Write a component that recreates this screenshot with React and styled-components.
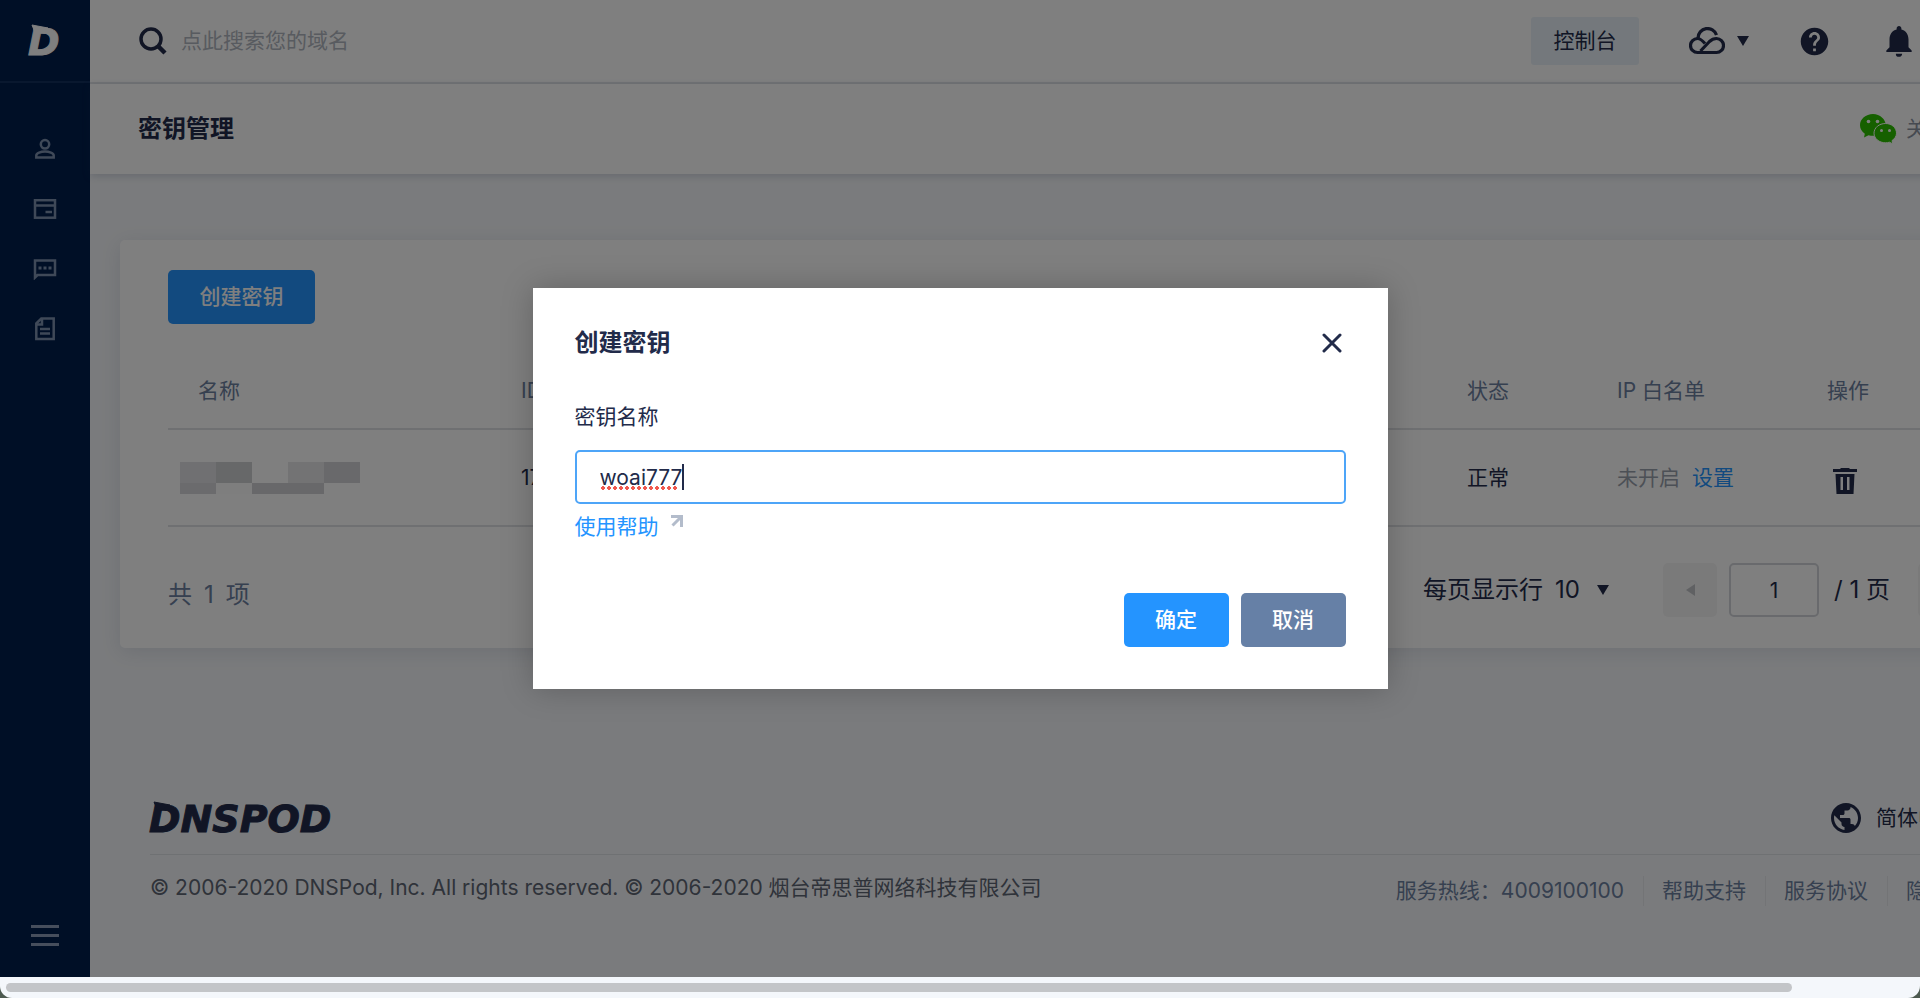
import React, { useState } from 'react';
import styled, { createGlobalStyle } from 'styled-components';
import { MdHelp, MdNotifications, MdPublic } from 'react-icons/md';

const GlobalStyle = createGlobalStyle`
  * { box-sizing: border-box; }
  body {
    margin: 0;
    background: #4d5a50;
    color: #222b4a;
    font-family: Inter, "Noto Sans CJK SC", sans-serif;
    font-size: 21px;
    line-height: 30px;
  }
  button, input, select { font: inherit; color: inherit; }
  button { border: 0; background: none; padding: 0; cursor: pointer; }
  a { color: inherit; text-decoration: none; }
  svg { display: block; flex: none; }
`;

const PersonIcon = () => (
  <svg width="22" height="22" viewBox="0 0 22 22" fill="none" stroke="currentColor" strokeWidth="2.500">
    <circle cx="11" cy="6.300" r="4.200" />
    <path d="M2.300 19.500v-2c0-2.500 4.500-4 8.700-4s8.700 1.500 8.700 4v2z" />
  </svg>
);

const CardIcon = () => (
  <svg width="24" height="20" viewBox="0 0 24 20" fill="none" stroke="currentColor" strokeWidth="2.500">
    <rect x="2" y="1.200" width="20" height="17.500" />
    <path d="M2 6.500h20" />
    <path d="M12.500 13h6.500" />
  </svg>
);

const ChatIcon = () => (
  <svg width="24" height="21" viewBox="0 0 24 21" fill="none" stroke="currentColor" strokeWidth="2.500">
    <path d="M2 18.500V1.500h20v14.500H4.500z" />
    <path d="M5.500 9h3M10.500 9h3M15.500 9h3" strokeWidth="3" />
  </svg>
);

const DocIcon = () => (
  <svg width="20" height="24" viewBox="0 0 20 24" fill="none" stroke="currentColor" strokeWidth="2.500">
    <path d="M1.300 6.500l5-5h12.400v20.500H1.300z" />
    <path d="M1.300 7.500h5.700V1.500" />
    <path d="M5 12h10M5 16.500h10" />
  </svg>
);

const SearchIcon = () => (
  <svg width="28" height="28" viewBox="0 0 28 28" fill="none" stroke="currentColor" strokeWidth="3.500">
    <circle cx="12" cy="12" r="10" />
    <path d="M19 19l7 7" strokeWidth="4.500" />
  </svg>
);

const CloudIcon = () => (
  <svg width="36" height="28" viewBox="0 0 36 28" fill="none" stroke="currentColor" strokeWidth="3.200">
    <path d="M16 16.500C13 13 11 11.500 8.500 11.500a7 7 0 0 0 0 14H27.500a7 7 0 0 0 0-14c-3 0-5 1-7 3L11.500 24" />
    <path d="M9 11a9.500 9.500 0 0 1 18.500-3" />
  </svg>
);

const WechatIcon = () => (
  <svg width="37" height="30" viewBox="0 0 37 30">
    <path fill="#2cc100" d="M13 0C5.800 0 0 5 0 11.200c0 3.500 1.900 6.500 4.800 8.600L4 23.500l4.500-2.300c1.500.4 3 .6 4.500.6 7 0 12.700-4.700 12.700-10.600S20 0 13 0z" />
    <path fill="#2cc100" stroke="#fff" d="M25.500 9.500c-6.300 0-11.500 4.200-11.500 9.700 0 5.300 5.200 9.600 11.500 9.600 1.400 0 2.700-.2 3.900-.6l3.400 1.600-.8-3.200c2.800-1.800 4.500-4.500 4.500-7.400 0-5.500-4.800-9.700-11-9.700z" />
    <g fill="#fff">
      <circle cx="8.500" cy="7.500" r="1.800" />
      <circle cx="17.500" cy="7.500" r="1.800" />
      <circle cx="21.500" cy="16.500" r="1.500" />
      <circle cx="29.500" cy="16.500" r="1.500" />
    </g>
  </svg>
);

const TrashIcon = () => (
  <svg width="26" height="28" viewBox="0 0 26 28">
    <path fill="currentColor" fillRule="evenodd" d="M8 2l1-1h8l1 1h7v3H1V2zM3.500 7h19l-1 20h-17zM8.500 10v13H11V10zM15 10v13h2.500V10z" />
  </svg>
);

const CloseIcon = () => (
  <svg width="20" height="20" viewBox="0 0 20 20" stroke="currentColor" strokeWidth="3" strokeLinecap="round">
    <path d="M2 2l16 16M18 2L2 18" />
  </svg>
);

const MenuIcon = () => (
  <svg width="28" height="21" viewBox="0 0 28 21" stroke="currentColor" strokeWidth="3">
    <path d="M0 1.500h28M0 10.500h28M0 19.500h28" />
  </svg>
);

const OutIcon = () => (
  <svg width="12" height="12" viewBox="0 0 12 12" fill="none" stroke="#b3bccb" strokeWidth="3">
    <path d="M0 1.500h10.500V12M10 2L1.500 10.500" />
  </svg>
);

const Wordmark = styled.svg`
  font-family: "DejaVu Sans", sans-serif;
  font-weight: 700;
  font-style: italic;
  fill: currentColor;
  stroke: currentColor;
  stroke-width: 1px;
  overflow: visible;
`;

const Window = styled.div`
  height: 100vh;
  display: flex;
  flex-direction: column;
  overflow: hidden;
  border-radius: 0 0 12px 12px;
  background: #f4f7fb;
`;

const Viewport = styled.div`
  flex: 1;
  min-height: 0;
  position: relative;
  overflow: hidden;
`;

const Page = styled.div`
  display: flex;
  min-width: 2050px;
  height: 100%;
  background: #f5f7fa;
`;

const Sidebar = styled.nav`
  width: 90px;
  display: flex;
  flex-direction: column;
  align-items: center;
  background: #001e4c;
  color: #7f92b0;
`;

const Brand = styled.a`
  width: 100%;
  height: 83px;
  padding-top: 24px;
  display: flex;
  justify-content: center;
  border-bottom: 2px solid #12305f;
  color: #fff;
`;

const SideList = styled.div`
  flex: 1;
  padding-top: 36px;
`;

const SideButton = styled.button`
  width: 90px;
  height: 60px;
  display: grid;
  place-items: center;
`;

const MenuButton = styled(SideButton)`
  height: 84px;
  color: #8d9db8;
`;

const Main = styled.main`
  flex: 1;
  display: flex;
  flex-direction: column;
`;

const Header = styled.header`
  height: 84px;
  padding: 0 132px 0 49px;
  display: flex;
  align-items: center;
  background: #fff;
  border-bottom: 2px solid #e3e6ea;
`;

const Search = styled.label`
  flex: 1;
  display: flex;
  align-items: center;
  gap: 14px;

  input {
    width: 400px;
    border: 0;
    padding: 0;
    outline: 0;
    background: none;
  }
  input::placeholder { color: #b1b6c0; opacity: 1; }
`;

const ConsoleButton = styled.button`
  width: 108px;
  height: 48px;
  border-radius: 3px;
  background: #e9f1f8;
`;

const HeaderTools = styled.div`
  display: flex;
  align-items: center;
  margin-left: 50px;
  gap: 49px;
`;

const IconButton = styled.button`
  display: flex;
  align-items: center;
  gap: 12px;
`;

const Caret = styled.span`
  border: 6px solid transparent;
  border-top: 10px solid currentColor;
  border-bottom: 0;
`;

const TitleBar = styled.div`
  height: 90px;
  padding: 0 60px 0 48px;
  display: flex;
  align-items: center;
  justify-content: space-between;
  background: #fff;
  box-shadow: 0 2px 8px rgba(40, 60, 100, 0.2);
`;

const Title = styled.h1`
  margin: 0;
  font-size: 24px;
  font-weight: 700;
`;

const Follow = styled.a`
  display: flex;
  align-items: center;
  gap: 9px;
  color: #8d95a3;
`;

const Panel = styled.section`
  margin: 66px 30px 0;
  padding: 30px 48px 31px;
  border-radius: 5px;
  background: #fff;
  box-shadow: 0 4px 20px rgba(40, 60, 100, 0.12);
`;

const Button = styled.button`
  min-width: ${({ $wide }) => ($wide ? 147 : 105)}px;
  height: 54px;
  border-radius: 5px;
  background: ${({ $muted }) => ($muted ? '#6680a6' : '#2494ff')};
  color: #fff;
  font-weight: 500;
`;

const Table = styled.table`
  width: 100%;
  margin-top: 30px;
  border-collapse: collapse;
  table-layout: fixed;

  th, td {
    padding: 0 0 0 30px;
    text-align: left;
    white-space: nowrap;
    border-bottom: 2px solid #dfe1e5;
  }
  th {
    height: 75px;
    color: #6c80a0;
    font-weight: 400;
  }
  td { height: 97px; }
`;

const Mosaic = styled.div`
  display: grid;
  grid-template: 21px 11px / repeat(5, 36px);
  margin-left: -18px;
`;

const Tile = styled.span`
  background: ${({ $shade }) => $shade};
`;

const Muted = styled.span`
  margin-right: 12px;
  color: #99a0ad;
`;

const Link = styled.a`
  color: #2494ff;
`;

const RowAction = styled.button`
  display: block;
  margin: 6px 0 0 5px;
`;

const PanelFoot = styled.div`
  display: flex;
  align-items: center;
  justify-content: space-between;
  padding-top: 36px;
  font-size: 24px;
`;

const Total = styled.span`
  display: flex;
  gap: 12px;
  padding-top: 9px;
  color: #6c80a0;
`;

const Pager = styled.div`
  display: flex;
  align-items: center;
`;

const PageSize = styled.label`
  display: flex;
  align-items: center;
  gap: 12px;
  margin-right: 54px;

  select {
    appearance: none;
    border: 0;
    padding: 0 5px 0 0;
    background: none;
  }
`;

const StepButton = styled.button`
  width: 54px;
  height: 54px;
  border-radius: 5px;
  display: grid;
  place-items: center;
  background: #f5f5f5;
  color: #c0c2c6;

  span {
    border: 6px solid transparent;
    border-right: 9px solid currentColor;
    border-left: 0;
    transform: ${({ $next }) => ($next ? 'rotate(180deg)' : 'none')};
  }
`;

const PageInput = styled.input`
  width: 90px;
  height: 54px;
  margin: 0 15px 0 12px;
  padding: 0;
  text-align: center;
  font-size: 21px;
  border: 2px solid #d2d5da;
  border-radius: 5px;
  background: #fff;
`;

const PageCount = styled.span`
  margin-right: 28px;
`;

const Footer = styled.footer`
  margin-top: 151px;
  padding: 0 60px;
`;

const FooterTop = styled.div`
  display: flex;
  align-items: center;
  justify-content: space-between;
  height: 56px;
  padding-bottom: 18px;
  border-bottom: 1px solid #dfe2e6;
`;

const Language = styled.button`
  display: flex;
  align-items: center;
  gap: 12px;
  margin-right: 30px;
`;

const FooterBottom = styled.div`
  display: flex;
  justify-content: space-between;
  padding-top: 18px;
  color: #5e6675;
`;

const FooterLinks = styled.div`
  display: flex;
  padding-top: 3px;
  color: #6c80a0;

  > * + * {
    margin-left: 19px;
    padding-left: 18px;
    border-left: 1px solid #e6e9ed;
  }
`;

const Overlay = styled.div`
  position: absolute;
  inset: 0;
  display: grid;
  place-items: center;
  background: rgba(0, 0, 0, 0.5);
`;

const Dialog = styled.form`
  width: 855px;
  padding: 40px 42px 42px;
  background: #fff;
  box-shadow: 0 0 30px rgba(0, 0, 0, 0.22);
`;

const DialogHead = styled.div`
  display: flex;
  align-items: center;
  justify-content: space-between;
  padding-right: 4px;
`;

const FieldLabel = styled.label`
  display: block;
  margin: 44px 0 18px;
`;

const Field = styled.div`
  position: relative;

  input {
    width: 100%;
    height: 54px;
    padding: 0 23px;
    border: 2px solid #4ea5f8;
    border-radius: 5px;
    outline: 0;
    background: #fff;
    caret-color: transparent;
  }
`;

/* sits over the typed value: dotted spelling mark and the caret */
const TypedMark = styled.span`
  position: absolute;
  left: 25px;
  top: 14px;
  height: 26px;
  border-right: 2px solid #222b4a;
  color: transparent;
  pointer-events: none;
  user-select: none;

  &::after {
    content: '';
    position: absolute;
    left: 0;
    right: 3px;
    bottom: 0;
    height: 4px;
    background: radial-gradient(circle, #f0594f 2px, transparent 2px) 0 0 / 6px 4px;
  }
`;

const HelpLink = styled(Link)`
  display: inline-flex;
  gap: 12px;
  margin-top: 8px;

  svg { margin-top: 3px; }
`;

const Actions = styled.div`
  display: flex;
  justify-content: flex-end;
  gap: 12px;
  margin-top: 51px;
`;

const ScrollTrack = styled.div`
  height: 21px;
  padding: 6px;
`;

const ScrollThumb = styled.div`
  width: 93.6%;
  height: 9px;
  border-radius: 5px;
  background: #c3c5c8;
`;

const tiles = ['#e0e1e4', '#cfd0d3', '#fff', '#e6e7e9', '#d2d2d7', '#d6d7da', '#fdfdfd', '#d0d1d5', '#d0d1d5', '#fff'];

const sideItems = [
  { label: '账号', icon: <PersonIcon /> },
  { label: '费用', icon: <CardIcon /> },
  { label: '消息', icon: <ChatIcon /> },
  { label: '日志', icon: <DocIcon /> },
];

const App = () => {
  const [name, setName] = useState('woai777');
  const [open, setOpen] = useState(true);

  return (
    <Window>
      <GlobalStyle />
      <Viewport>
        <Page>
          <Sidebar>
            <Brand href="#" aria-label="DNSPod">
              <Wordmark width="32" height="32" viewBox="0 0 32 32" fontSize="38">
                <text x="-1" y="31">D</text>
                <path d="M3 1l16 3-12 7z" />
              </Wordmark>
            </Brand>
            <SideList>
              {sideItems.map((item) => (
                <SideButton key={item.label} aria-label={item.label}>{item.icon}</SideButton>
              ))}
            </SideList>
            <MenuButton aria-label="菜单"><MenuIcon /></MenuButton>
          </Sidebar>

          <Main>
            <Header>
              <Search>
                <SearchIcon />
                <input placeholder="点此搜索您的域名" aria-label="搜索" />
              </Search>
              <ConsoleButton>控制台</ConsoleButton>
              <HeaderTools>
                <IconButton aria-label="云产品"><CloudIcon /><Caret /></IconButton>
                <IconButton aria-label="帮助"><MdHelp size={33} /></IconButton>
                <IconButton aria-label="通知"><MdNotifications size={38} /></IconButton>
              </HeaderTools>
            </Header>

            <TitleBar>
              <Title>密钥管理</Title>
              <Follow href="#"><WechatIcon />关注我们</Follow>
            </TitleBar>

            <Panel>
              <Button $wide onClick={() => setOpen(true)}>创建密钥</Button>
              <Table>
                <colgroup>
                  <col style={{ width: 323 }} />
                  <col />
                  <col style={{ width: 150 }} />
                  <col style={{ width: 210 }} />
                  <col style={{ width: 175 }} />
                </colgroup>
                <thead>
                  <tr>
                    <th>名称</th>
                    <th>ID</th>
                    <th>状态</th>
                    <th>IP 白名单</th>
                    <th>操作</th>
                  </tr>
                </thead>
                <tbody>
                  <tr>
                    <td>
                      <Mosaic>
                        {tiles.map((shade, i) => <Tile key={i} $shade={shade} />)}
                      </Mosaic>
                    </td>
                    <td>17</td>
                    <td>正常</td>
                    <td><Muted>未开启</Muted><Link href="#">设置</Link></td>
                    <td><RowAction aria-label="删除"><TrashIcon /></RowAction></td>
                  </tr>
                </tbody>
              </Table>
              <PanelFoot>
                <Total><span>共</span><span>1</span><span>项</span></Total>
                <Pager>
                  <PageSize>
                    每页显示行
                    <select defaultValue="10"><option>10</option></select>
                    <Caret />
                  </PageSize>
                  <StepButton aria-label="上一页"><span /></StepButton>
                  <PageInput defaultValue="1" aria-label="页码" />
                  <PageCount>/ 1 页</PageCount>
                  <StepButton $next aria-label="下一页"><span /></StepButton>
                </Pager>
              </PanelFoot>
            </Panel>

            <Footer>
              <FooterTop>
                <Wordmark width="180" height="32" viewBox="0 0 180 32" fontSize="38" role="img" aria-label="DNSPod">
                  <text x="-1" y="30">DNSPOD</text>
                  <path d="M4 0l16 3-12 7z" />
                </Wordmark>
                <Language><MdPublic size={36} />简体中文</Language>
              </FooterTop>
              <FooterBottom>
                <span>© 2006-2020 DNSPod, Inc. All rights reserved. © 2006-2020 烟台帝思普网络科技有限公司</span>
                <FooterLinks>
                  <span>服务热线：4009100100</span>
                  <a href="#">帮助支持</a>
                  <a href="#">服务协议</a>
                  <a href="#">隐私声明</a>
                </FooterLinks>
              </FooterBottom>
            </Footer>
          </Main>
        </Page>

        {open && (
          <Overlay>
            <Dialog onSubmit={(e) => e.preventDefault()}>
              <DialogHead>
                <Title as="h2">创建密钥</Title>
                <IconButton type="button" aria-label="关闭" onClick={() => setOpen(false)}><CloseIcon /></IconButton>
              </DialogHead>
              <FieldLabel htmlFor="key-name">密钥名称</FieldLabel>
              <Field>
                <input id="key-name" value={name} spellCheck={false} onChange={(e) => setName(e.target.value)} />
                <TypedMark aria-hidden="true">{name}</TypedMark>
              </Field>
              <HelpLink href="#">使用帮助<OutIcon /></HelpLink>
              <Actions>
                <Button type="submit">确定</Button>
                <Button type="button" $muted onClick={() => setOpen(false)}>取消</Button>
              </Actions>
            </Dialog>
          </Overlay>
        )}
      </Viewport>
      <ScrollTrack><ScrollThumb /></ScrollTrack>
    </Window>
  );
};

export default App;
